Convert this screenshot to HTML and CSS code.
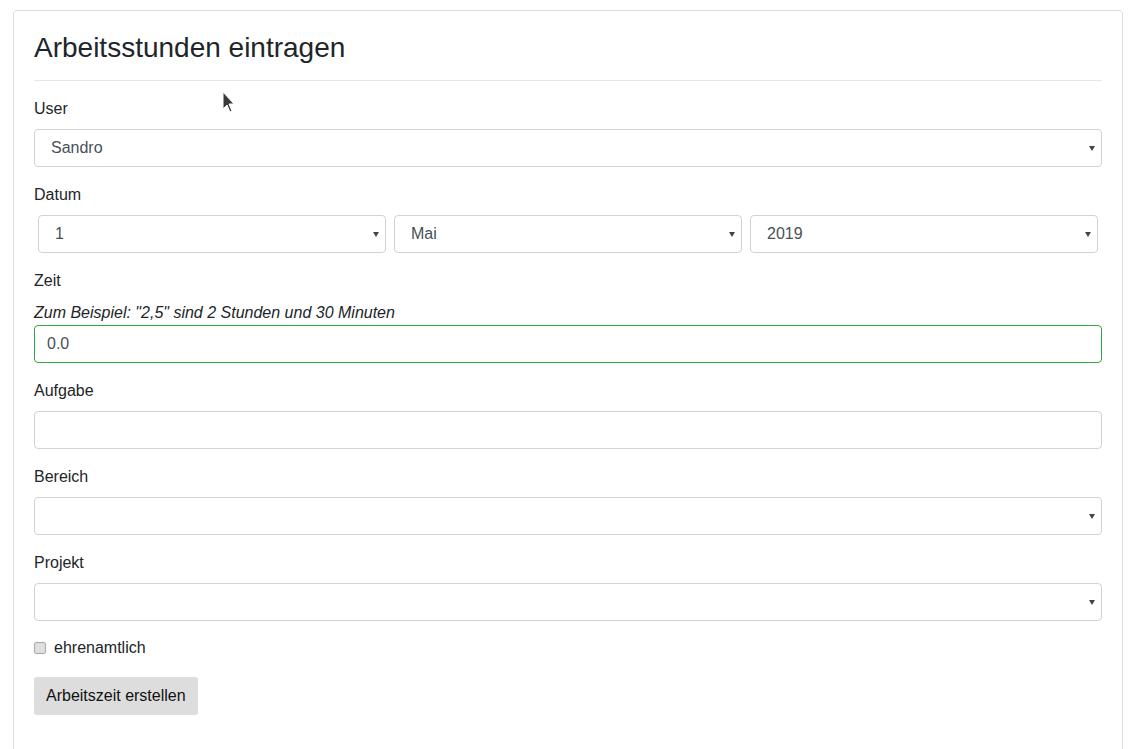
FILE: index.html
```html
<!DOCTYPE html>
<html lang="de">
<head>
<meta charset="utf-8">
<title>Arbeitsstunden eintragen</title>
<link rel="stylesheet" href="styles.css">
</head>
<body>
<div class="card">
  <h3 class="title">Arbeitsstunden eintragen</h3>
  <hr class="rule">
  <form class="form">
    <div class="group">
      <label class="label">User</label>
      <select class="control select"><option>Sandro</option></select>
    </div>
    <div class="group">
      <label class="label">Datum</label>
      <div class="date-row">
        <div class="col"><select class="control select"><option>1</option></select></div>
        <div class="col"><select class="control select"><option>Mai</option></select></div>
        <div class="col"><select class="control select"><option>2019</option></select></div>
      </div>
    </div>
    <div class="group">
      <label class="label">Zeit</label>
      <div class="hint">Zum Beispiel: "2,5" sind 2 Stunden und 30 Minuten</div>
      <input class="control input valid" type="text" value="0.0">
    </div>
    <div class="group">
      <label class="label">Aufgabe</label>
      <input class="control input" type="text">
    </div>
    <div class="group">
      <label class="label">Bereich</label>
      <select class="control select"><option></option></select>
    </div>
    <div class="group">
      <label class="label">Projekt</label>
      <select class="control select"><option></option></select>
    </div>
    <div class="check-row">
      <input class="check" type="checkbox" id="ehren">
      <label class="check-label" for="ehren">ehrenamtlich</label>
    </div>
    <button class="btn" type="button">Arbeitszeit erstellen</button>
  </form>
  <svg class="cursor" width="14" height="22" viewBox="0 0 14 22"><path d="M1 1 L1 18 L5 14 L8 21 L10 20 L7 13 L12 13 Z" fill="#3a3a3a" stroke="#ffffff" stroke-width="1"/></svg>
</div>
</body>
</html>
```
FILE: styles.css
```css
* { box-sizing: border-box; }
html, body { margin: 0; padding: 0; background: #fff; }
body {
  font-family: "Liberation Sans", Arial, sans-serif;
  font-size: 16px;
  line-height: 24px;
  color: #212529;
}
.card {
  position: relative;
  margin: 10px 0 0 13px;
  width: 1110px;
  min-height: 760px;
  border: 1px solid #dcdcdc;
  border-radius: 4px;
  padding: 20px 20px 20px 20px;
}
.title {
  margin: 0;
  font-size: 28px;
  font-weight: 400;
  line-height: 34px;
  color: #212529;
}
.rule {
  margin: 15px 0 15px 0;
  border: 0;
  border-top: 1px solid #e6e6e6;
  height: 0;
}
.form { margin: 0; }
.group { margin-bottom: 15px; }
.label {
  display: block;
  padding-top: 1px;
  margin-bottom: 8px;
  line-height: 24px;
}
.control {
  display: block;
  width: 100%;
  height: 38px;
  border: 1px solid #ced4da;
  border-radius: 4px;
  background-color: #fff;
  font-family: "Liberation Sans", Arial, sans-serif;
  font-size: 16px;
  color: #495057;
  margin: 0;
}
.select {
  -webkit-appearance: none;
  appearance: none;
  padding: 0 24px 1px 16px;
  background-image: url("data:image/svg+xml,%3Csvg xmlns='http://www.w3.org/2000/svg' width='6' height='5' viewBox='0 0 6 5'%3E%3Cpath d='M0 0 L6 0 L3 5 Z' fill='%23444'/%3E%3C/svg%3E");
  background-repeat: no-repeat;
  background-position: right 6px center;
  background-size: 6px 5px;
}
.input { padding: 0 12px; outline: none; }
.valid { border-color: #28a745; }
.date-row {
  display: flex;
}
.col {
  flex: 1 1 0;
  padding: 0 4px;
}
.hint {
  font-style: italic;
  line-height: 24px;
}
.check-row {
  display: flex;
  align-items: center;
  height: 24px;
  margin-bottom: 17px;
}
.check {
  -webkit-appearance: none;
  appearance: none;
  width: 12px;
  height: 12px;
  margin: 0 8px 0 0;
  border: 1px solid #a9a9a9;
  border-radius: 2px;
  background: #dedede;
}
.check-label { line-height: 24px; }
.btn {
  display: inline-block;
  height: 38px;
  padding: 0 12px;
  border: 0;
  border-radius: 3px;
  background: #dddddd;
  color: #111;
  font-family: "Liberation Sans", Arial, sans-serif;
  font-size: 16px;
}
.cursor {
  position: absolute;
  left: 208px;
  top: 80px;
}
```
